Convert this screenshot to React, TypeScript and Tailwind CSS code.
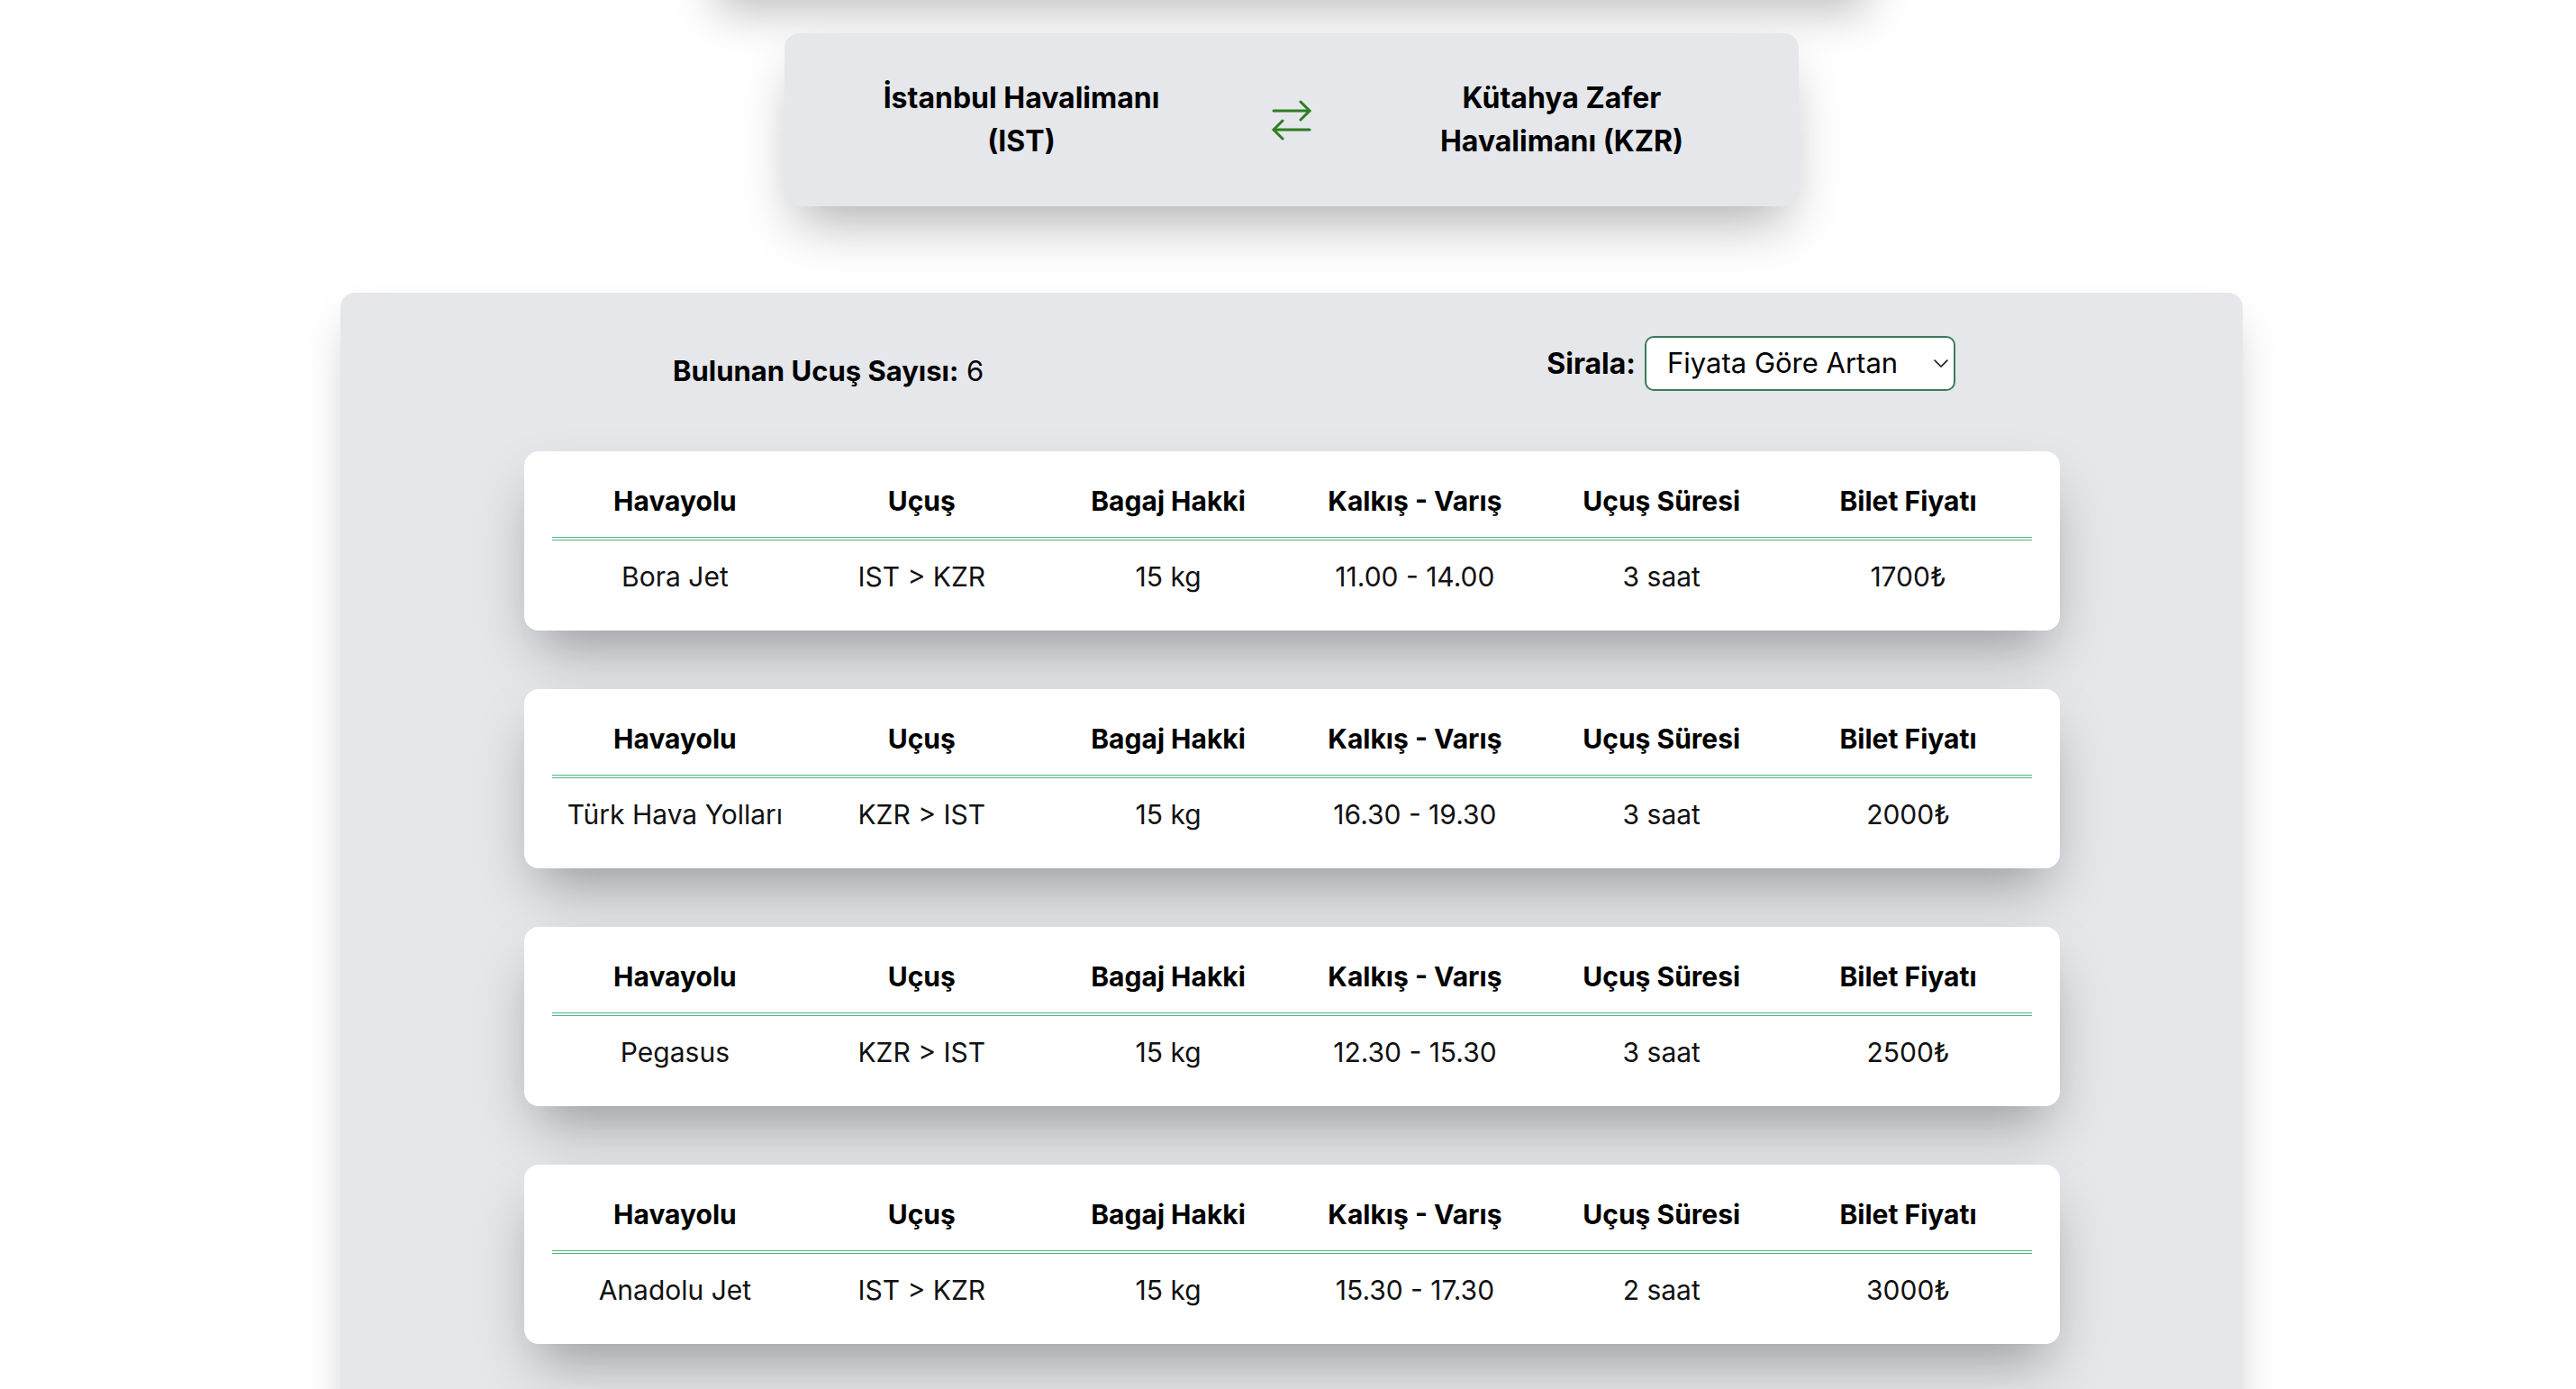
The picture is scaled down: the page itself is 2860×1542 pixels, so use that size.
import React from "react";

type Flight = {
  airline: string;
  route: string;
  bag: string;
  time: string;
  duration: string;
  price: string;
};

const flights: Flight[] = [
  { airline: "Bora Jet", route: "IST > KZR", bag: "15 kg", time: "11.00 - 14.00", duration: "3 saat", price: "1700₺" },
  { airline: "Türk Hava Yolları", route: "KZR > IST", bag: "15 kg", time: "16.30 - 19.30", duration: "3 saat", price: "2000₺" },
  { airline: "Pegasus", route: "KZR > IST", bag: "15 kg", time: "12.30 - 15.30", duration: "3 saat", price: "2500₺" },
  { airline: "Anadolu Jet", route: "IST > KZR", bag: "15 kg", time: "15.30 - 17.30", duration: "2 saat", price: "3000₺" },
];

const headers = ["Havayolu", "Uçuş", "Bagaj Hakki", "Kalkış - Varış", "Uçuş Süresi", "Bilet Fiyatı"];

function SwapIcon() {
  return (
    <svg width="44" height="48" viewBox="0 0 44 48" fill="none" stroke="#2f7d22" strokeWidth="3" strokeLinecap="round" strokeLinejoin="round">
      <path d="M2 14H42" />
      <path d="M32 4L42 14L32 24" />
      <path d="M42 35H2" />
      <path d="M12 25L2 35L12 45" />
    </svg>
  );
}

function FlightCard({ f }: { f: Flight }) {
  const vals = [f.airline, f.route, f.bag, f.time, f.duration, f.price];
  return (
    <div className="w-[1705px] rounded-2xl bg-white px-[31px] pt-[35px] pb-[40px] shadow-[0_32px_64px_-14px_rgba(0,0,0,0.34)]">
      <div className="grid grid-cols-6 pb-[20px]">
        {headers.map((h) => (
          <div key={h} className="text-center text-[30px] leading-[40px] font-bold text-black">
            {h}
          </div>
        ))}
      </div>
      <div className="h-[4px] border-y border-[#4db57f]" />
      <div className="grid grid-cols-6 pt-[20px]">
        {vals.map((v, i) => (
          <div key={i} className="text-center text-[30px] leading-[40px] font-normal text-[#111]">
            {v}
          </div>
        ))}
      </div>
    </div>
  );
}

export default function App() {
  return (
    <div className="min-h-screen bg-white font-['Inter',sans-serif] text-black overflow-hidden">
      <div className="flex flex-col items-center pl-[8px]">
        <div className="w-[1300px] h-[100px] -mt-[100px] bg-white shadow-[0_25px_50px_-12px_rgba(0,0,0,0.25)] rounded-2xl" />
        <div className="mt-[37px] w-[1126px] h-[192px] rounded-2xl bg-[#e5e7eb] shadow-[0_30px_60px_-14px_rgba(0,0,0,0.32)] flex items-center justify-center gap-[108px]">
          <div className="w-[340px] text-center text-[32px] leading-[48px] font-bold">
            İstanbul Havalimanı (IST)
          </div>
          <SwapIcon />
          <div className="w-[340px] text-center text-[32px] leading-[48px] font-bold">
            Kütahya Zafer Havalimanı (KZR)
          </div>
        </div>

        <div className="mt-[96px] w-[2112px] rounded-2xl bg-[#e5e7eb] shadow-[0_25px_50px_-12px_rgba(0,0,0,0.25)] pt-[48px] pb-[160px]">
          <div className="flex items-center justify-between pl-[369px] pr-[319px]">
            <div className="pt-[16px] text-[31px] leading-[40px]">
              <span className="font-bold">Bulunan Ucuş Sayısı:</span> 6
            </div>
            <div className="flex items-center gap-[10px]">
              <span className="text-[32px] leading-[40px] font-bold">Sirala:</span>
              <div className="relative">
                <select
                  defaultValue="asc"
                  className="appearance-none w-[345px] h-[61px] rounded-[10px] border-2 border-[#3b7b5a] bg-white pl-[23px] text-[31px] text-black outline-none"
                >
                  <option value="asc">Fiyata Göre Artan</option>
                  <option value="desc">Fiyata Göre Azalan</option>
                </select>
                <svg
                  className="pointer-events-none absolute right-[8px] top-[26px]"
                  width="16"
                  height="9"
                  viewBox="0 0 16 9"
                  fill="none"
                  stroke="#111"
                  strokeWidth="1.6"
                  strokeLinecap="round"
                  strokeLinejoin="round"
                >
                  <path d="M1 1L8 8L15 1" />
                </svg>
              </div>
            </div>
          </div>

          <div className="mt-[67px] flex flex-col items-center gap-[65px]">
            {flights.map((f, i) => (
              <FlightCard key={i} f={f} />
            ))}
          </div>
        </div>
      </div>
    </div>
  );
}
